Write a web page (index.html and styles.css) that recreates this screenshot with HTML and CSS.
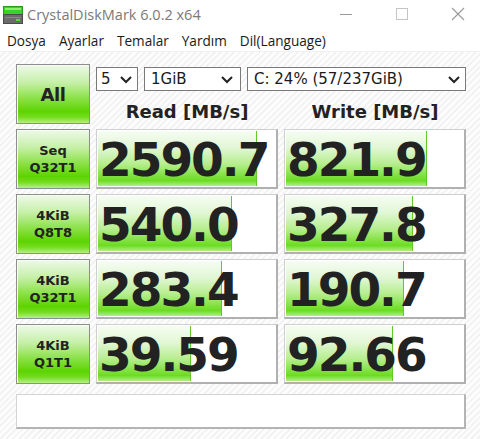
FILE: index.html
```html
<!DOCTYPE html>
<html lang="tr">
<head>
<meta charset="utf-8">
<title>CrystalDiskMark 6.0.2 x64</title>
<link rel="stylesheet" href="styles.css">
</head>
<body>
<div class="window">
  <div class="titlebar">
    <svg class="app-icon" width="20" height="18" viewBox="0 0 20 18">
      <rect x="0.5" y="0.5" width="19" height="8" fill="#3fcf2a" stroke="#2a9a1a"/>
      <rect x="2" y="2" width="16" height="2" fill="#8fef6a"/>
      <rect x="0.5" y="8.5" width="19" height="9" fill="#6b6b6b" stroke="#4a4a4a"/>
      <rect x="2" y="11" width="16" height="1" fill="#8a8a8a"/>
      <rect x="13" y="13" width="4" height="2" fill="#55dd33"/>
    </svg>
    <span class="title">CrystalDiskMark 6.0.2 x64</span>
    <div class="controls">
      <svg class="ctl" width="46" height="30" viewBox="0 0 46 30"><line x1="18" y1="14.5" x2="30" y2="14.5" stroke="#9a9a9a" stroke-width="1"/></svg>
      <svg class="ctl" width="46" height="30" viewBox="0 0 46 30"><rect x="18.5" y="8.5" width="11" height="11" fill="none" stroke="#c4c4c4" stroke-width="1"/></svg>
      <svg class="ctl" width="46" height="30" viewBox="0 0 46 30"><path d="M18 8 L30 20 M30 8 L18 20" stroke="#9a9a9a" stroke-width="1.1" fill="none"/></svg>
    </div>
  </div>
  <div class="menubar">
    <span class="menu-item">Dosya</span>
    <span class="menu-item">Ayarlar</span>
    <span class="menu-item">Temalar</span>
    <span class="menu-item">Yardım</span>
    <span class="menu-item">Dil(Language)</span>
  </div>
  <div class="main">
    <div class="grid">
      <div class="btn btn-all">All</div>
      <div class="top-right">
        <div class="selects">
          <div class="select sel-count"><span>5</span><svg width="12" height="8" viewBox="0 0 12 8"><polyline points="1,1 6,6 11,1" fill="none" stroke="#222" stroke-width="2"/></svg></div>
          <div class="select sel-size"><span>1GiB</span><svg width="12" height="8" viewBox="0 0 12 8"><polyline points="1,1 6,6 11,1" fill="none" stroke="#222" stroke-width="2"/></svg></div>
          <div class="select sel-drive"><span>C: 24% (57/237GiB)</span><svg width="12" height="8" viewBox="0 0 12 8"><polyline points="1,1 6,6 11,1" fill="none" stroke="#222" stroke-width="2"/></svg></div>
        </div>
        <div class="headers">
          <div class="head">Read [MB/s]</div>
          <div class="head">Write [MB/s]</div>
        </div>
      </div>

      <div class="btn btn-label">Seq<br>Q32T1</div>
      <div class="value"><div class="bar" style="width:88.2%"></div><span class="num">2590.7</span></div>
      <div class="value"><div class="bar" style="width:78.2%"></div><span class="num">821.9</span></div>

      <div class="btn btn-label">4KiB<br>Q8T8</div>
      <div class="value"><div class="bar" style="width:74.5%"></div><span class="num">540.0</span></div>
      <div class="value"><div class="bar" style="width:70.2%"></div><span class="num">327.8</span></div>

      <div class="btn btn-label">4KiB<br>Q32T1</div>
      <div class="value"><div class="bar" style="width:68.9%"></div><span class="num">283.4</span></div>
      <div class="value"><div class="bar" style="width:65.5%"></div><span class="num">190.7</span></div>

      <div class="btn btn-label">4KiB<br>Q1T1</div>
      <div class="value"><div class="bar" style="width:51.5%"></div><span class="num">39.59</span></div>
      <div class="value"><div class="bar" style="width:59.0%"></div><span class="num">92.66</span></div>
    </div>
    <div class="status"></div>
  </div>
</div>
</body>
</html>
```
FILE: styles.css
```css
html, body {
  margin: 0;
  padding: 0;
}
body {
  width: 480px;
  height: 439px;
  overflow: hidden;
  background: #ffffff;
}
.window {
  width: 480px;
  height: 439px;
  display: flex;
  flex-direction: column;
}
.titlebar {
  height: 30px;
  display: flex;
  align-items: center;
  background: #ffffff;
}
.app-icon {
  margin-left: 3px;
  margin-top: -1px;
}
.title {
  margin-left: 4px;
  font-family: "Open Sans", "Noto Sans", sans-serif;
  font-size: 14.5px;
  color: #7a7a7a;
  margin-top: -1px;
}
.controls {
  margin-left: auto;
  display: flex;
}
.ctl {
  display: block;
  margin-left: 10px;
}
.menubar {
  height: 21px;
  display: flex;
  align-items: center;
  padding-left: 7px;
  gap: 13px;
  background: #ffffff;
  border-bottom: 1px solid #f0f0f0;
  font-family: "Open Sans", "Noto Sans", sans-serif;
  font-size: 13.6px;
  color: #1a1a1a;
}
.main {
  flex: 1;
  padding: 12px 0 0 16px;
  background: repeating-linear-gradient(135deg, #fdfdfd 0px, #fdfdfd 2.5px, #f3f3f3 2.5px, #f3f3f3 4.5px);
}
.grid {
  display: grid;
  grid-template-columns: 74px 182px 182px;
  grid-auto-rows: 60px;
  column-gap: 6px;
  row-gap: 5px;
}
.btn {
  box-sizing: border-box;
  border: 1px solid #8e8e8e;
  box-shadow: inset 1px 1px 0 #f4fff0;
  background: linear-gradient(to bottom, #eef9ea 0%, #c6f0a8 30%, #86e040 60%, #5cd402 80%, #74dc20 90%, #b4f088 100%);
  display: flex;
  align-items: center;
  justify-content: center;
  text-align: center;
  font-family: "DejaVu Sans", Verdana, sans-serif;
  font-weight: bold;
  color: #222222;
}
.btn-all {
  font-size: 18px;
  letter-spacing: -0.5px;
}
.btn-label {
  font-size: 13px;
  line-height: 17px;
}
.top-right {
  grid-column: 2 / 4;
  display: flex;
  flex-direction: column;
}
.selects {
  display: flex;
  gap: 6px;
  margin-top: 3px;
  height: 24px;
}
.select {
  box-sizing: border-box;
  height: 24px;
  border: 1px solid #7a7a7a;
  background: #ffffff;
  display: flex;
  align-items: center;
  justify-content: space-between;
  padding: 0 5px 0 4px;
  font-family: "DejaVu Sans", Verdana, sans-serif;
  font-size: 15px;
  color: #1a1a1a;
}
.select svg {
  display: block;
  margin-top: 1px;
}
.sel-count { width: 42px; }
.sel-size { width: 97px; padding-left: 6px; padding-right: 7px; }
.sel-drive { width: 219px; padding-left: 6px; }
.headers {
  display: grid;
  grid-template-columns: 182px 182px;
  column-gap: 6px;
  flex: 1;
  align-items: center;
  padding-top: 7px;
}
.head {
  text-align: center;
  font-family: "DejaVu Sans", Verdana, sans-serif;
  font-weight: bold;
  font-size: 18px;
  color: #222222;
}
.value {
  position: relative;
  box-sizing: border-box;
  background: #ffffff;
  border: 1px solid #cfcfcf;
  border-right: 2px solid #b0b0b0;
  border-bottom: 2px solid #b0b0b0;
  overflow: hidden;
  display: flex;
  align-items: center;
}
.bar {
  position: absolute;
  left: 1px;
  top: 1px;
  bottom: 1px;
  background: linear-gradient(to bottom, #f6fcf2 0%, #e2f7d6 30%, #b6ee8e 60%, #84e244 80%, #6cdc22 90%, #b0ee88 100%);
  border-right: 1px solid #62c82a;
}
.num {
  position: relative;
  padding-left: 2px;
  font-family: "DejaVu Sans", Verdana, sans-serif;
  font-weight: bold;
  font-size: 47px;
  letter-spacing: -2px;
  color: #222222;
  white-space: nowrap;
  margin-top: 1px;
}
.status {
  box-sizing: border-box;
  width: 450px;
  height: 35px;
  margin-top: 10px;
  background: #ffffff;
  border: 1px solid #d4d4d4;
  border-right: 2px solid #b4b4b4;
  border-bottom: 2px solid #b4b4b4;
}
```
